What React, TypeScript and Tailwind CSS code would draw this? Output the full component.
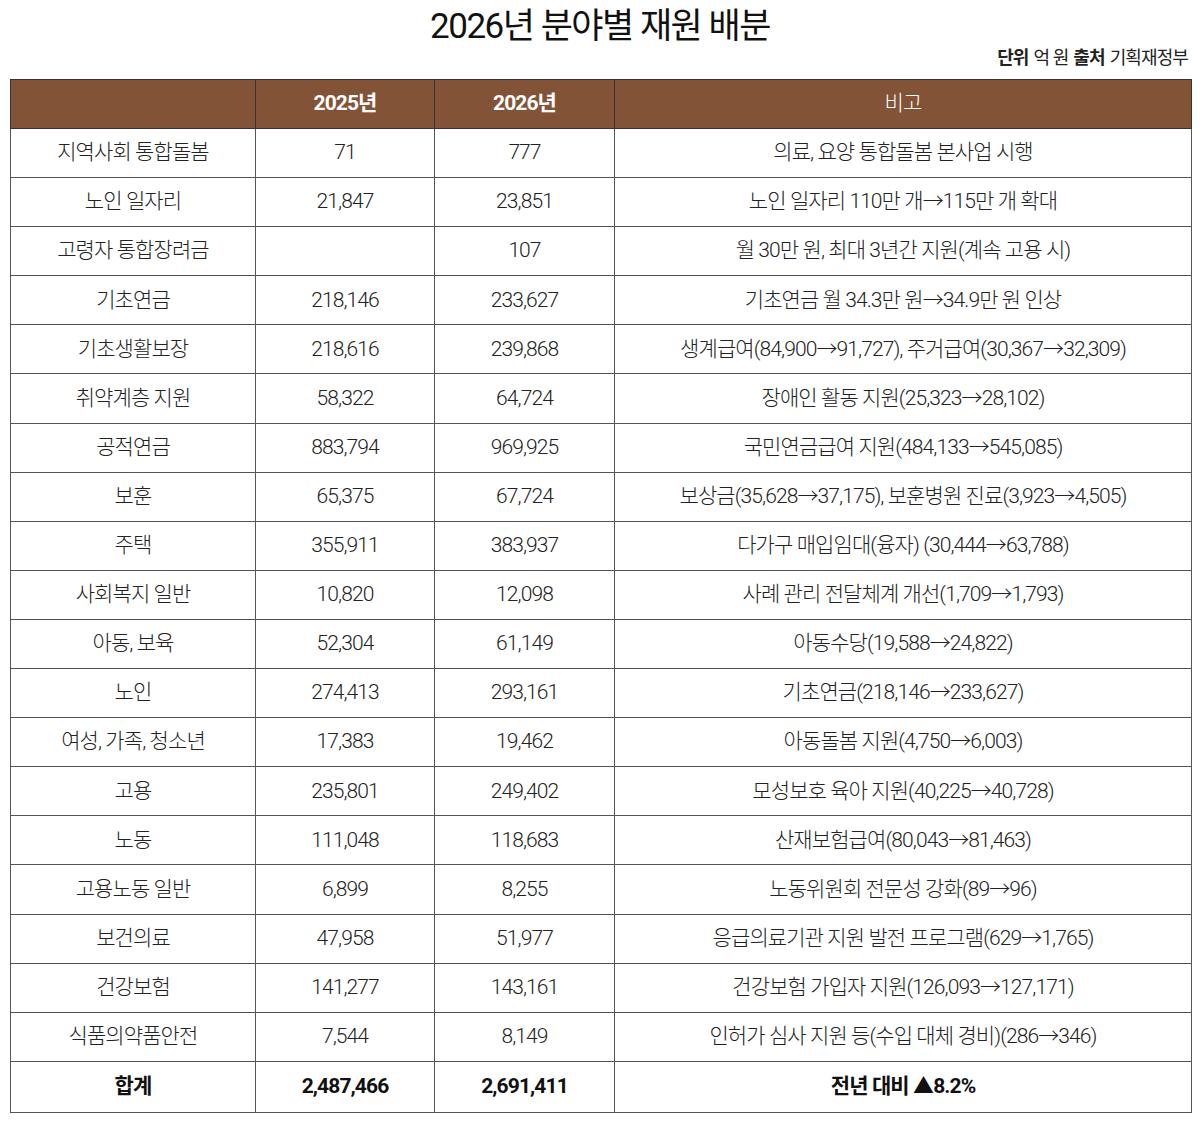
const rows: [string, string, string, string][] = [
  ["지역사회 통합돌봄", "71", "777", "의료, 요양 통합돌봄 본사업 시행"],
  ["노인 일자리", "21,847", "23,851", "노인 일자리 110만 개→115만 개 확대"],
  ["고령자 통합장려금", "", "107", "월 30만 원, 최대 3년간 지원(계속 고용 시)"],
  ["기초연금", "218,146", "233,627", "기초연금 월 34.3만 원→34.9만 원 인상"],
  ["기초생활보장", "218,616", "239,868", "생계급여(84,900→91,727), 주거급여(30,367→32,309)"],
  ["취약계층 지원", "58,322", "64,724", "장애인 활동 지원(25,323→28,102)"],
  ["공적연금", "883,794", "969,925", "국민연금급여 지원(484,133→545,085)"],
  ["보훈", "65,375", "67,724", "보상금(35,628→37,175), 보훈병원 진료(3,923→4,505)"],
  ["주택", "355,911", "383,937", "다가구 매입임대(융자) (30,444→63,788)"],
  ["사회복지 일반", "10,820", "12,098", "사례 관리 전달체계 개선(1,709→1,793)"],
  ["아동, 보육", "52,304", "61,149", "아동수당(19,588→24,822)"],
  ["노인", "274,413", "293,161", "기초연금(218,146→233,627)"],
  ["여성, 가족, 청소년", "17,383", "19,462", "아동돌봄 지원(4,750→6,003)"],
  ["고용", "235,801", "249,402", "모성보호 육아 지원(40,225→40,728)"],
  ["노동", "111,048", "118,683", "산재보험급여(80,043→81,463)"],
  ["고용노동 일반", "6,899", "8,255", "노동위원회 전문성 강화(89→96)"],
  ["보건의료", "47,958", "51,977", "응급의료기관 지원 발전 프로그램(629→1,765)"],
  ["건강보험", "141,277", "143,161", "건강보험 가입자 지원(126,093→127,171)"],
  ["식품의약품안전", "7,544", "8,149", "인허가 심사 지원 등(수입 대체 경비)(286→346)"],
];

const font = {
  fontFamily: '"Roboto", "Noto Sans CJK KR", sans-serif',
};

export default function App() {
  return (
    <div className="w-[1200px] h-[1123px] bg-white text-[#222]" style={font}>
      <h1 className="pt-[6px] text-center text-[35px] leading-[42px] font-normal tracking-[-1.5px] text-[#111]">
        2026년 분야별 재원 배분
      </h1>
      <div className="flex justify-end pr-[12px] mt-[-1px] text-[18px] leading-[22px] tracking-[-0.9px] text-[#222]">
        <span className="font-bold">단위</span>
        <span className="ml-[5px]">억 원</span>
        <span className="ml-[5px] font-bold">출처</span>
        <span className="ml-[5px]">기획재정부</span>
      </div>
      <div className="mt-[10px] mx-[10px]">
        <table className="w-[1182px] border-collapse table-fixed text-[21px] font-light tracking-[-0.9px]">
          <colgroup>
            <col className="w-[245px]" />
            <col className="w-[179px]" />
            <col className="w-[180px]" />
            <col />
          </colgroup>
          <thead>
            <tr className="h-[49px] bg-[#835337] text-white">
              <th className="border border-[#333] font-normal"></th>
              <th className="border border-[#333] font-bold">2025년</th>
              <th className="border border-[#333] font-bold">2026년</th>
              <th className="border border-[#333] font-light">비고</th>
            </tr>
          </thead>
          <tbody>
            {rows.map((r) => (
              <tr key={r[0]} className="h-[49.1px]">
                <td className="border border-[#555] text-center">{r[0]}</td>
                <td className="border border-[#555] text-center">{r[1]}</td>
                <td className="border border-[#555] text-center">{r[2]}</td>
                <td className="border border-[#555] text-center">{r[3]}</td>
              </tr>
            ))}
            <tr className="h-[51px] font-bold text-[#111]">
              <td className="border border-[#555] text-center">합계</td>
              <td className="border border-[#555] text-center">2,487,466</td>
              <td className="border border-[#555] text-center">2,691,411</td>
              <td className="border border-[#555] text-center">전년 대비 ▲8.2%</td>
            </tr>
          </tbody>
        </table>
      </div>
    </div>
  );
}
